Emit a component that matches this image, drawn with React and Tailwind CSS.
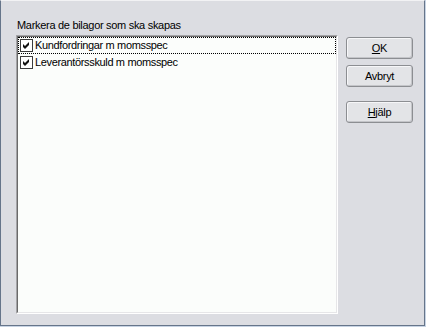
import React from "react";

const items = ["Kundfordringar m momsspec", "Leverantörsskuld m momsspec"];

function Check() {
  return (
    <svg width="13" height="13" viewBox="0 0 13 13" className="shrink-0">
      <rect x="0.5" y="0.5" width="12" height="12" fill="#ffffff" stroke="#3c3c3c" />
      <path d="M3 5 L5 7 L9 3 L9 6 L5 10 L3 8 Z" fill="#111111" />
    </svg>
  );
}

function Btn({ children }) {
  return (
    <button
      type="button"
      className="w-[67px] h-[22px] rounded-[3px] border border-[#8c8e92] bg-[#e3e4e7] text-[11px] tracking-[-0.3px] text-black shadow-[inset_-1px_-1px_0_#c4c5c9,inset_1px_1px_0_#f6f6f8] flex items-center justify-center"
    >
      {children}
    </button>
  );
}

export default function App() {
  return (
    <div className="w-[426px] h-[327px] bg-[#c7d3e3]" style={{ fontFamily: "'Liberation Sans', Arial, sans-serif" }}>
      <div className="w-[425px] h-[326px] bg-[#dcdde2] border-l border-r border-b border-[#66758a] border-t border-t-[#f2f2f4] flex items-start pl-[15px] pt-[17px]">
        <div className="w-[322px] flex flex-col">
          <div className="h-[17px] text-[11px] tracking-[-0.3px] leading-[14px] text-black pl-[1px]">Markera de bilagor som ska skapas</div>
          <div className="h-[279px] border border-t-[#a3a3a6] border-l-[#a3a3a6] border-r-white border-b-white">
            <div className="h-full border border-t-[#6a6a6a] border-l-[#6a6a6a] border-r-[#e6e6e8] border-b-[#e6e6e8] bg-[#fbfdfb]">
              {items.map((t, i) => (
                <div
                  key={t}
                  className={
                    "h-[17px] flex items-center gap-[2px] pl-[1px] text-[11px] tracking-[-0.35px] text-black " +
                    (i === 0 ? "border border-dotted border-black" : "border border-transparent")
                  }
                >
                  <Check />
                  <span className="leading-none">{t}</span>
                </div>
              ))}
            </div>
          </div>
        </div>
        <div className="ml-[8px] mt-[19px] flex flex-col">
          <Btn>
            <span><span className="underline">O</span>K</span>
          </Btn>
          <div className="h-[6px]" />
          <Btn>Avbryt</Btn>
          <div className="h-[14px]" />
          <Btn>
            <span><span className="underline">H</span>jälp</span>
          </Btn>
        </div>
      </div>
    </div>
  );
}
